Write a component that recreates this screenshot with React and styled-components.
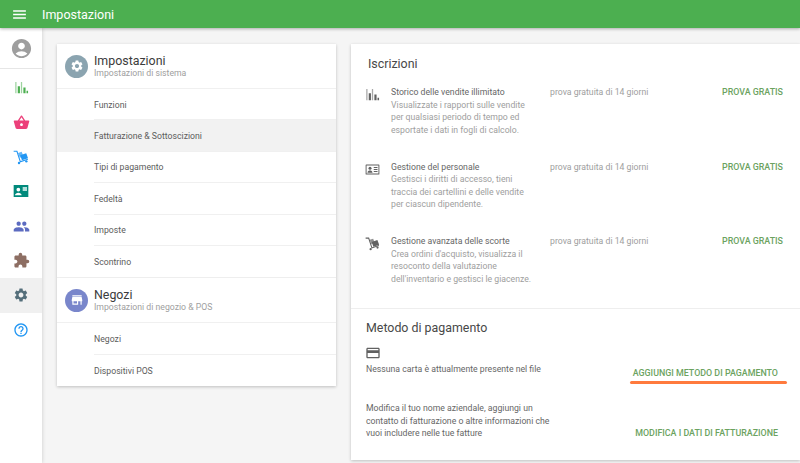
import React from 'react';
import styled, { createGlobalStyle } from 'styled-components';
import { MdMenu, MdAccountCircle, MdShoppingBasket, MdPeople, MdExtension, MdSettings, MdHelpOutline, MdCreditCard, MdStore } from 'react-icons/md';

const Global = createGlobalStyle`
  html, body { margin: 0; padding: 0; height: 100%; }
  body { font-family: Roboto, "Liberation Sans", sans-serif; background: #f5f5f5; overflow: hidden; }
  * { box-sizing: border-box; }
`;

const Page = styled.div`
  width: 800px; height: 463px; display: flex; flex-direction: column; overflow: hidden; background: #f5f5f5;
`;
const TopBar = styled.header`
  height: 28px; flex: none; background: #4caf50; color: #fff; display: flex; align-items: center;
  padding-left: 11px; box-shadow: 0 1px 3px rgba(0,0,0,.3); position: relative; z-index: 2;
  svg { width: 17px; height: 17px; }
`;
const BarTitle = styled.div`
  margin-left: 14px; font-size: 12.5px; font-weight: 400;
`;
const Body = styled.div`
  flex: 1; display: flex; min-height: 0;
`;
const Side = styled.nav`
  width: 42px; flex: none; background: #fff; box-shadow: 0 0 4px rgba(0,0,0,.18); display: flex; flex-direction: column;
`;
const Avatar = styled.div`
  height: 41px; padding-top: 1px; border-bottom: 1px solid #e6e6e6; display: flex; align-items: center; justify-content: center;
  color: #9e9e9e; svg { width: 23px; height: 23px; }
`;
const SideItem = styled.div`
  height: 34.7px; display: flex; align-items: center; justify-content: center;
  color: ${p => p.$c}; background: ${p => (p.$active ? '#f0f0f0' : 'transparent')};
  svg { width: ${p => p.$s || 16}px; height: ${p => p.$s || 16}px; }
`;
const SideList = styled.div`
  padding-top: 1px; display: flex; flex-direction: column;
`;
const Main = styled.main`
  flex: 1; display: flex; align-items: flex-start; padding: 16px 0 0 15px; gap: 15px; min-width: 0;
`;
const Card = styled.section`
  background: #fff; box-shadow: 0 1px 3px rgba(0,0,0,.22);
`;
const LeftCard = styled(Card)`
  width: 279px; height: 342px; flex: none;
`;
const RightCard = styled(Card)`
  width: 449px; height: 416px; flex: none;
`;
const SecHead = styled.div`
  height: ${p => p.$h}px; display: flex; align-items: center; padding-left: 8px; border-bottom: 1px solid #f0f0f0;
  ${p => p.$top && 'border-top: 1px solid #eee;'}
`;
const Circle = styled.div`
  width: 23px; height: 23px; border-radius: 50%; background: ${p => p.$c}; color: #fff;
  display: flex; align-items: center; justify-content: center; flex: none;
  svg { width: 14px; height: 14px; }
`;
const HeadText = styled.div`
  margin-left: 6px; display: flex; flex-direction: column;
`;
const HeadTitle = styled.div`
  font-size: 12.4px; line-height: 15px; color: #3c3c3c;
`;
const HeadSub = styled.div`
  font-size: 8.7px; line-height: 11px; color: #a0a0a0;
`;
const MenuRow = styled.div`
  height: 31.4px; display: flex; background: ${p => (p.$active ? '#f2f2f2' : 'transparent')};
`;
const MenuInner = styled.div`
  flex: 1; margin-left: 37px; padding-top: 1px; display: flex; align-items: center; font-size: 8.7px; color: #5c5c5c;
  border-bottom: ${p => (p.$last ? 'none' : '1px solid #f0f0f0')};
`;
const Subs = styled.div`
  padding: 11px 0 0 15px; height: 265px; border-bottom: 1px solid #eee;
`;
const CardTitle = styled.h2`
  margin: 0 0 ${p => p.$gap || 0}px ${p => p.$indent || 0}px; font-weight: 400; font-size: 12.4px; line-height: 18px; color: #484848;
`;
const Plan = styled.div`
  display: grid; grid-template-columns: 25px 159px 1fr auto; height: 74.5px; padding-right: 17px;
`;
const PlanIcon = styled.div`
  color: #616161; padding-top: 1px; margin-left: -1px; svg { width: 15px; height: 15px; display: block; }
`;
const PlanText = styled.div`
  font-size: 8.7px; line-height: 12.5px; color: #9e9e9e; white-space: nowrap;
`;
const PlanName = styled.div`
  color: #666;
`;
const Trial = styled.div`
  font-size: 8.7px; line-height: 12.5px; color: #9e9e9e;
`;
const Action = styled.div`
  position: relative; font-size: 8.9px; font-weight: 500; line-height: 12.5px; color: #6ca35f; white-space: nowrap;
  margin-top: ${p => p.$top || 0}px; margin-right: ${p => p.$right || 0}px;
`;
const Underline = styled.div`
  position: absolute; left: -3px; right: -9px; top: 13.5px; height: 3px; border-radius: 2px; background: #ff7a3d;
`;
const Pay = styled.div`
  padding: 10px 17px 0 15px;
`;
const CardIcon = styled.div`
  color: #616161; margin-top: 8px; height: 15px; svg { width: 16px; height: 16px; display: block; margin-left: -1px; }
`;
const PayRow = styled.div`
  display: flex; justify-content: space-between; align-items: flex-start;
`;
const PayText = styled.div`
  font-size: 8.7px; line-height: 12.5px; color: #666; width: 190px;
`;
const FirstRow = styled(PayRow)`
  margin-top: 3px; height: 39px;
`;
const SecondRow = styled(PayRow)`
  align-items: flex-end;
`;
const NoWrapText = styled(PayText)`
  width: auto; white-space: nowrap;
`;

const Bars = () => (
  <svg viewBox="0 0 24 24" fill="currentColor">
    <path opacity=".55" d="M2 3h2v18H2zM11 3h2v18h-2z" />
    <path d="M6 10h3.500v11H6zM15 12h3.500v9H15zM20 17h2.500v4H20z" />
  </svg>
);
const Cart = () => (
  <svg viewBox="0 0 24 24" fill="currentColor">
    <path d="M1 2.500h5.500l5 15.500 10.500-3.500.500 1.600-12 4L5.300 4.300H1z" />
    <path d="M7.500 6l5.500-1.800 2.800 7-5.500 1.800z" opacity=".7" />
    <path d="M10.800 9.500l9-3 2.800 7.500-9.200 3z" />
    <circle cx="9" cy="21" r="1.800" /><circle cx="20" cy="18.500" r="1.800" />
  </svg>
);
const IdCard = ({ outline }) => outline ? (
  <svg viewBox="0 0 24 24" fill="currentColor"><path fillRule="evenodd" d="M2 4h20a1 1 0 0 1 1 1v14a1 1 0 0 1-1 1H2a1 1 0 0 1-1-1V5a1 1 0 0 1 1-1zm.5 1.500v13h19v-13z" /><circle cx="8" cy="10" r="2.400" /><path d="M4 17c0-2.500 2.200-3.500 4-3.500s4 1 4 3.500zM14 8h6v1.600h-6zM14 11.200h6v1.600h-6zM14 14.400h6V16h-6z" /></svg>
) : (
  <svg viewBox="0 0 24 24" fill="currentColor">
    <path fillRule="evenodd" d="M1 3h22v18H1zM8 7a2.800 2.800 0 1 0 0 5.600A2.800 2.800 0 0 0 8 7zM3 18.500h10c0-2.800-2.800-4-5-4s-5 1.200-5 4z" />
    <path fill="#b2dfdb" d="M14.500 6H21v6h-6.500z" />
  </svg>
);

const plans = [
  { icon: <Bars />, name: 'Storico delle vendite illimitato', lines: ['Visualizzate i rapporti sulle vendite', 'per qualsiasi periodo di tempo ed', 'esportate i dati in fogli di calcolo.'] },
  { icon: <IdCard outline />, name: 'Gestione del personale', lines: ['Gestisci i diritti di accesso, tieni', 'traccia dei cartellini e delle vendite', 'per ciascun dipendente.'] },
  { icon: <Cart />, name: 'Gestione avanzata delle scorte', lines: ["Crea ordini d'acquisto, visualizza il", 'resoconto della valutazione', "dell'inventario e gestisci le giacenze."] },
];

export default function App() {
  return (
    <Page>
      <Global />
      <TopBar><MdMenu /><BarTitle>Impostazioni</BarTitle></TopBar>
      <Body>
        <Side>
          <Avatar><MdAccountCircle /></Avatar>
          <SideList>
            <SideItem $c="#4caf50" $s={15}><Bars /></SideItem>
            <SideItem $c="#ec407a" $s={17}><MdShoppingBasket /></SideItem>
            <SideItem $c="#2196f3" $s={16}><Cart /></SideItem>
            <SideItem $c="#00897b" $s={16}><IdCard /></SideItem>
            <SideItem $c="#5c6bc0" $s={17}><MdPeople /></SideItem>
            <SideItem $c="#8d6e63" $s={17}><MdExtension /></SideItem>
            <SideItem $c="#546e7a" $active><MdSettings /></SideItem>
            <SideItem $c="#2196f3" $s={16}><MdHelpOutline /></SideItem>
          </SideList>
        </Side>
        <Main>
          <LeftCard>
            <SecHead $h={45}>
              <Circle $c="#8ba4b0"><MdSettings /></Circle>
              <HeadText><HeadTitle>Impostazioni</HeadTitle><HeadSub>Impostazioni di sistema</HeadSub></HeadText>
            </SecHead>
            <MenuRow><MenuInner>Funzioni</MenuInner></MenuRow>
            <MenuRow $active><MenuInner>Fatturazione &amp; Sottoscizioni</MenuInner></MenuRow>
            <MenuRow><MenuInner>Tipi di pagamento</MenuInner></MenuRow>
            <MenuRow><MenuInner>Fedeltà</MenuInner></MenuRow>
            <MenuRow><MenuInner>Imposte</MenuInner></MenuRow>
            <MenuRow><MenuInner $last>Scontrino</MenuInner></MenuRow>
            <SecHead $h={46} $top>
              <Circle $c="#7986cb"><MdStore /></Circle>
              <HeadText><HeadTitle>Negozi</HeadTitle><HeadSub>Impostazioni di negozio &amp; POS</HeadSub></HeadText>
            </SecHead>
            <MenuRow><MenuInner>Negozi</MenuInner></MenuRow>
            <MenuRow><MenuInner $last>Dispositivi POS</MenuInner></MenuRow>
          </LeftCard>
          <RightCard>
            <Subs>
              <CardTitle $gap={13} $indent={2}>Iscrizioni</CardTitle>
              {plans.map(p => (
                <Plan key={p.name}>
                  <PlanIcon>{p.icon}</PlanIcon>
                  <PlanText>
                    <PlanName>{p.name}</PlanName>
                    {p.lines.map(l => <div key={l}>{l}</div>)}
                  </PlanText>
                  <Trial>prova gratuita di 14 giorni</Trial>
                  <Action>PROVA GRATIS</Action>
                </Plan>
              ))}
            </Subs>
            <Pay>
              <CardTitle>Metodo di pagamento</CardTitle>
              <CardIcon><MdCreditCard /></CardIcon>
              <FirstRow>
                <NoWrapText>Nessuna carta è attualmente presente nel file</NoWrapText>
                <Action $top={4} $right={5}>AGGIUNGI METODO DI PAGAMENTO<Underline /></Action>
              </FirstRow>
              <SecondRow>
                <PayText>Modifica il tuo nome aziendale, aggiungi un contatto di fatturazione o altre informazioni che vuoi includere nelle tue fatture</PayText>
                <Action $right={5}>MODIFICA I DATI DI FATTURAZIONE</Action>
              </SecondRow>
            </Pay>
          </RightCard>
        </Main>
      </Body>
    </Page>
  );
}
